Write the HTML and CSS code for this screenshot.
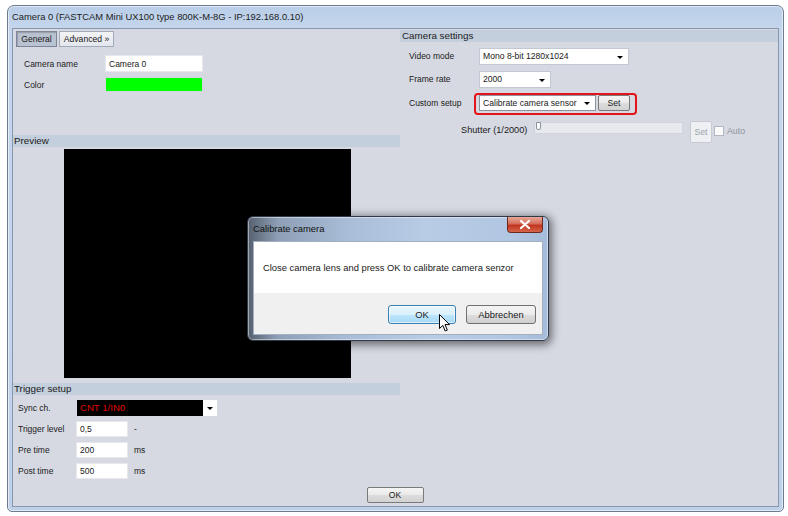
FILE: index.html
```html
<!DOCTYPE html>
<html>
<head>
<meta charset="utf-8">
<link rel="stylesheet" href="styles.css">
</head>
<body>
<div class="window">
  <div class="titlebar">Camera 0 (FASTCAM Mini UX100 type 800K-M-8G - IP:192.168.0.10)</div>
  <div class="client">
    <div class="main">
      <div class="left">
        <div class="tabs">
          <span class="tab active tab-general">General</span>
          <span class="tab tab-adv">Advanced »</span>
        </div>
        <div class="general">
          <div class="grow"><span class="glabel">Camera name</span><span class="input name-input">Camera 0</span></div>
          <div class="grow"><span class="glabel">Color</span><span class="swatch"></span></div>
        </div>
        <div class="section-head preview-head">Preview</div>
        <div class="preview"></div>
        <div class="section-head trigger-head">Trigger setup</div>
        <div class="trigger">
          <div class="trow"><span class="tlabel">Sync ch.</span><span class="sync"><span class="sync-val">CNT 1/IN0</span><span class="sync-arrow"><i class="tri"></i></span></span></div>
          <div class="trow"><span class="tlabel">Trigger level</span><span class="input small">0,5</span><span class="unit">-</span></div>
          <div class="trow"><span class="tlabel">Pre time</span><span class="input small">200</span><span class="unit">ms</span></div>
          <div class="trow"><span class="tlabel">Post time</span><span class="input small">500</span><span class="unit">ms</span></div>
        </div>
      </div>
      <div class="right">
        <div class="section-head settings-head">Camera settings</div>
        <div class="rform">
          <div class="rrow r1"><span class="rlabel">Video mode</span><span class="select sel-video">Mono 8-bit 1280x1024<i class="tri"></i></span></div>
          <div class="rrow r2"><span class="rlabel">Frame rate</span><span class="select sel-rate">2000<i class="tri"></i></span></div>
          <div class="rrow r3"><span class="rlabel">Custom setup</span>
            <span class="highlight"><span class="select sel-custom">Calibrate camera sensor<i class="tri"></i></span><span class="btn btn-set">Set</span></span>
          </div>
          <div class="rrow r4">
            <span class="shutter-label">Shutter (1/2000)</span>
            <span class="slider"><span class="thumb"></span></span>
            <span class="btn btn-disabled">Set</span>
            <span class="check"></span><span class="auto">Auto</span>
          </div>
        </div>
      </div>
    </div>
    <div class="footer"><span class="btn btn-ok">OK</span></div>
  </div>
</div>

<div class="dialog">
  <div class="dtitle">Calibrate camera</div>
  <span class="dclose"><svg width="12" height="9" viewBox="0 0 12 9"><path d="M2 1 L10 8 M10 1 L2 8" stroke="#fff" stroke-width="2.2" stroke-linecap="round"/></svg></span>
  <div class="dbody">
    <div class="dmsg">Close camera lens and press OK to calibrate camera senzor</div>
    <div class="dfoot">
      <span class="dbtn dbtn-ok">OK</span>
      <span class="dbtn">Abbrechen</span>
    </div>
  </div>
</div>

<svg class="cursor" width="12" height="19" viewBox="0 0 12 19"><path d="M0.5 0.5 L0.5 14.5 L3.8 11.4 L6.2 17 L8.3 16.1 L6 10.6 L10.5 10.6 Z" fill="#fff" stroke="#000" stroke-width="1" stroke-linejoin="round"/></svg>
</body>
</html>
```

FILE: styles.css
```css
* { box-sizing: border-box; }
body {
  margin: 0;
  background: #fff;
  font-family: "Liberation Sans", Arial, sans-serif;
  font-size: 8.5px;
  color: #1a1a1a;
}
.window {
  margin: 5px 0 0 7px;
  width: 777px;
  height: 507px;
  border: 1px solid #6d7b8f;
  border-radius: 7px 7px 5px 5px;
  background: linear-gradient(#b9cee8, #c5d6ec 24px, #c3d4ea 60%, #bfd1e8);
  padding: 0 4px 4px 4px;
  display: flex;
  flex-direction: column;
  box-shadow: inset 0 0 0 1px rgba(255,255,255,0.55);
}
.titlebar {
  height: 22px;
  line-height: 22px;
  font-size: 9.4px;
  color: #1b1b1b;
  white-space: nowrap;
}
.client {
  flex: 1;
  background: #d6d9e2;
  border: 1px solid #8797ae;
  display: flex;
  flex-direction: column;
}
.main { flex: 1; display: flex; }
.left { width: 387px; }
.right { flex: 1; }

.tabs { display: flex; gap: 2px; padding: 2px 0 0 3px; }
.tab {
  height: 16px;
  line-height: 14px;
  border: 1px solid #a2abb9;
  background: linear-gradient(#f3f4f7, #e3e6ec);
  font-size: 8.6px;
  text-align: center;
}
.tab.active {
  background: #b9c2d0;
  border-color: #7c8698;
  box-shadow: inset 1px 1px 1px rgba(0,0,0,0.18);
}
.tab-general { width: 41px; }
.tab-adv { width: 55px; }

.general { padding: 8px 0 0 11px; display: flex; flex-direction: column; gap: 5px; }
.grow { display: flex; align-items: center; }
.glabel { width: 81px; }
.input {
  background: #fff;
  height: 17px;
  line-height: 17px;
  padding-left: 3px;
  border: 1px solid #e6e8ee;
}
.name-input { width: 98px; }
.swatch { width: 98px; height: 15px; background: #00ff00; border: 1px solid #d2d6de; }

.section-head {
  height: 12px;
  line-height: 12px;
  background: #c3cfdc;
  font-size: 9.8px;
  padding-left: 1px;
  color: #1b1b1b;
}
.preview-head { margin-top: 43px; }
.preview { margin: 2px 0 0 51px; width: 287px; height: 229px; background: #000; }
.trigger-head { margin-top: 5px; }
.trigger { padding: 5px 0 0 5px; display: flex; flex-direction: column; gap: 5px; }
.trow { display: flex; align-items: center; height: 16px; }
.tlabel { width: 58px; }
.small { width: 52px; height: 16px; line-height: 15px; }
.unit { margin-left: 6px; }
.sync { display: flex; height: 16px; margin-left: 1px; }
.sync-val {
  width: 126px;
  background: #000;
  color: #e00000;
  padding-left: 3px;
  line-height: 16px;
  font-size: 9.6px;
}
.sync-arrow { width: 14px; background: #fff; position: relative; }

.tri {
  position: absolute;
  width: 0; height: 0;
  border-left: 3px solid transparent;
  border-right: 3px solid transparent;
  border-top: 3px solid #000;
  top: 50%;
  margin-top: -1px;
}
.sync-arrow .tri { left: 4px; }

.settings-head { margin-top: 1px; padding-left: 2px; }
.rform { padding-left: 9px; display: flex; flex-direction: column; }
.rrow { display: flex; align-items: flex-start; }
.r1 { margin-top: 6px; height: 17px; }
.r2 { margin-top: 6px; height: 17px; }
.r3 { margin-top: 5px; height: 22px; }
.r4 { margin-top: 6px; height: 22px; padding-left: 52px; }
.rlabel { width: 70px; line-height: 17px; }
.r3 .rlabel { line-height: 20px; }
.select {
  position: relative;
  background: #fff;
  height: 17px;
  line-height: 15px;
  padding-left: 3px;
  border: 1px solid #c3c8d2;
  font-size: 8.6px;
}
.select .tri { right: 5px; }
.sel-video { width: 150px; }
.sel-rate { width: 72px; }
.sel-custom { width: 117px; height: 16px; line-height: 14px; border-color: #8d939c; }
.highlight {
  display: flex;
  gap: 2px;
  margin-left: -5px;
  height: 22px;
  padding: 0 5px 0 3px;
  border: 2px solid #e3141c;
  border-radius: 4px;
}
.btn {
  display: inline-block;
  text-align: center;
  background: linear-gradient(#f5f5f5, #e9e9e9 50%, #dcdcdc 51%, #d2d2d2);
  border: 1px solid #7a7a7a;
  border-radius: 2px;
  font-size: 8.6px;
}
.btn-set { width: 32px; height: 16px; line-height: 14px; }
.shutter-label { width: 73px; font-size: 9.2px; line-height: 18px; }
.slider {
  position: relative;
  width: 149px;
  height: 12px;
  margin-top: 1px;
  background: #e7e9ee;
  border: 1px solid #d0d4db;
}
.thumb {
  position: absolute;
  left: 1px; top: -1px;
  width: 5px; height: 8px;
  background: #fafafa;
  border: 1px solid #8c929b;
  border-radius: 0 0 2px 2px;
}
.btn-disabled {
  width: 22px;
  height: 22px;
  line-height: 20px;
  margin-left: 7px;
  background: #eef0f4;
  border-color: #c6cbd3;
  color: #9aa0aa;
}
.check {
  width: 10px; height: 10px;
  margin: 5px 0 0 2px;
  background: #fafafa;
  border: 1px solid #b3b9c3;
}
.auto { margin-left: 3px; color: #8e939c; line-height: 20px; font-size: 8.8px; }

.footer { height: 19px; display: flex; justify-content: center; align-items: flex-start; }
.btn-ok { width: 57px; height: 16px; line-height: 14px; margin-left: -1px; }

.dialog {
  position: absolute;
  left: 247px;
  top: 216px;
  width: 302px;
  height: 125px;
  border: 1px solid #2f3948;
  border-radius: 6px;
  padding: 0 5px 5px 5px;
  background: linear-gradient(90deg, #55606f 0px, #8e9fb6 30px, #a9bdd8 100px, #b9cce6 180px, #b1c6e2 260px, #a5bcda 302px);
  box-shadow: 1px 2px 9px 2px rgba(0,0,0,0.5), inset 0 0 0 1px rgba(255,255,255,0.45);
  display: flex;
  flex-direction: column;
}
.dtitle {
  height: 24px;
  line-height: 23px;
  font-size: 9.4px;
  color: #111;
}
.dclose {
  position: absolute;
  top: 0;
  right: 5px;
  width: 36px;
  height: 16px;
  border: 1px solid #6e2a20;
  border-top: none;
  border-radius: 0 0 4px 4px;
  background: linear-gradient(#e9a896, #d46e5c 45%, #c1341f 55%, #d5654b);
  display: flex;
  align-items: center;
  justify-content: center;
}
.dbody {
  flex: 1;
  display: flex;
  flex-direction: column;
  border: 1px solid #a3afc0;
}
.dmsg {
  height: 51px;
  background: #fff;
  padding-left: 9px;
  line-height: 52px;
  font-size: 9.4px;
  color: #1a1a1a;
}
.dfoot {
  flex: 1;
  background: #f0f0f0;
  display: flex;
  justify-content: flex-end;
  align-items: flex-start;
  gap: 10px;
  padding: 12px 6px 0 0;
}
.dbtn {
  width: 70px;
  height: 19px;
  line-height: 17px;
  text-align: center;
  font-size: 9.4px;
  border: 1px solid #707070;
  border-radius: 3px;
  background: linear-gradient(#f4f4f4, #ebebeb 50%, #dddddd 51%, #cfcfcf);
}
.dbtn-ok {
  width: 68px;
  border-color: #3c7fb1;
  background: linear-gradient(#eaf6fd, #d9f0fc 50%, #bee6fd 51%, #a7d9f5);
  box-shadow: inset 0 0 0 1px rgba(255,255,255,0.6);
}
.cursor { position: absolute; left: 439px; top: 314px; }
```
